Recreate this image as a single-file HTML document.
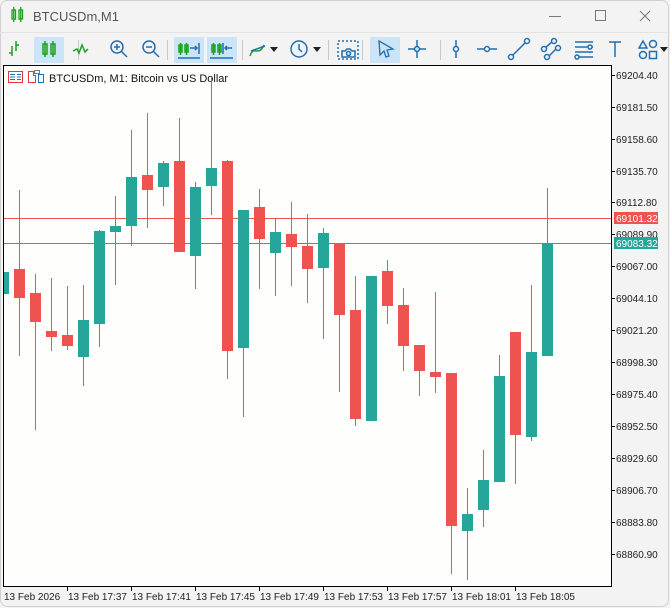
<!DOCTYPE html>
<html><head><meta charset="utf-8"><style>
html,body{margin:0;padding:0;background:#f3f3f3;width:670px;height:608px;overflow:hidden}
svg{display:block}
text{font-family:"Liberation Sans",sans-serif}
</style></head><body>
<svg width="670" height="608" viewBox="0 0 670 608" xmlns="http://www.w3.org/2000/svg">
<rect x="0" y="0" width="670" height="608" fill="#f3f3f3"/>
<rect x="0.5" y="0.5" width="668" height="606" rx="7" fill="none" stroke="#d0d0d0"/>
<!-- title -->
<g stroke="#1aa31a" stroke-width="1.3" fill="none">
<rect x="12" y="10" width="3.5" height="9"/><line x1="13.75" y1="7" x2="13.75" y2="22"/>
<rect x="19" y="10" width="3.5" height="9"/><line x1="20.75" y1="7" x2="20.75" y2="22"/>
</g>
<text x="33" y="21" font-size="13" fill="#555">BTCUSDm,M1</text>
<line x1="549" y1="16.5" x2="561" y2="16.5" stroke="#777"/>
<rect x="595.5" y="10.5" width="10" height="10" fill="none" stroke="#777"/>
<path d="M640 11L650 21M650 11L640 21" stroke="#777"/>
<line x1="0" y1="32.5" x2="670" y2="32.5" stroke="#e2e2e2"/>
<!-- toolbar -->
<g>
<rect x="34" y="37" width="30" height="26" fill="#cce4f7"/>
<rect x="174" y="37" width="30" height="26" fill="#cce4f7"/>
<rect x="207" y="37" width="30" height="26" fill="#cce4f7"/>
<rect x="370" y="37" width="30" height="26" fill="#cce4f7"/>
<g stroke="#c8c8c8"><line x1="78.5" y1="40" x2="78.5" y2="60"/><line x1="167.5" y1="40" x2="167.5" y2="60"/><line x1="242.5" y1="40" x2="242.5" y2="60"/><line x1="328.5" y1="40" x2="328.5" y2="60"/><line x1="362.5" y1="40" x2="362.5" y2="60"/><line x1="440.5" y1="40" x2="440.5" y2="60"/></g>
<g stroke="#1aa31a" stroke-width="1.5" fill="none">
<path d="M12 56V46M9 53H12M16 51V41M16 45H19"/>
<rect x="43" y="44" width="4" height="10"/><line x1="45" y1="41" x2="45" y2="57"/>
<rect x="51" y="44" width="4" height="10"/><line x1="53" y1="41" x2="53" y2="57"/>
<path d="M73 51L77 49L79 53L82 45L85 52L88 49"/>
<rect x="179" y="45" width="3" height="7"/><line x1="180.5" y1="43" x2="180.5" y2="55"/>
<rect x="185" y="45" width="3" height="7"/><line x1="186.5" y1="43" x2="186.5" y2="55"/>
<rect x="212" y="45" width="3" height="7"/><line x1="213.5" y1="43" x2="213.5" y2="55"/>
<rect x="218" y="45" width="3" height="7"/><line x1="219.5" y1="43" x2="219.5" y2="55"/>
<path d="M250 56C254 44 258 58 264 45" />
</g>
<g stroke="#1f6fb2" stroke-width="1.5" fill="none">
<circle cx="117" cy="47" r="6"/><path d="M121 51L127 57M114 47H120M117 44V50"/>
<circle cx="149" cy="47" r="6"/><path d="M153 51L159 57M146 47H152"/>
<path d="M190 48H197M195 46L197 48L195 50M199 43V54M178 58H200"/>
<path d="M225 48H232M227 46L225 48L227 50M223 43V54M210 58H233"/>
<path d="M251 51L265 46"/>
<circle cx="299" cy="49" r="8"/><path d="M299 44V49L302 52"/>
<rect x="338" y="41" width="20" height="18" stroke-dasharray="2 2"/>
<path d="M342 57V51H345L347 49H350L352 51H355V57Z"/><circle cx="348.5" cy="53.5" r="2"/>
<path d="M379 41L393 49L387 50L389 56L386 57L384 51L380 55Z" stroke-width="1.3"/>
<path d="M408 49H426M417 40V58"/><circle cx="417" cy="49" r="2.5" fill="#cce4f7"/>
<path d="M456 40V58"/><circle cx="456" cy="49" r="2.5" fill="#f3f3f3"/>
<path d="M477 49H497"/><circle cx="487" cy="49" r="2.5" fill="#f3f3f3"/>
<path d="M512 56L526 42"/><circle cx="511" cy="57" r="2.5" fill="#f3f3f3"/><circle cx="527" cy="41" r="2.5" fill="#f3f3f3"/>
<path d="M545 48L553 41M548 57L557 48"/><circle cx="544" cy="49" r="2.5" fill="#f3f3f3"/><circle cx="554" cy="41" r="2.5" fill="#f3f3f3"/><circle cx="547" cy="57" r="2.5" fill="#f3f3f3"/><circle cx="558" cy="48" r="2.5" fill="#f3f3f3"/>
<path d="M575 42H593M575 47H593M575 52H593M577 57H593"/><circle cx="590" cy="47" r="2" fill="#f3f3f3"/><circle cx="577" cy="57" r="2" fill="#f3f3f3"/>
<path d="M609 42H621M615 42V57"/>
<path d="M639 48L643 41L647 48Z"/><circle cx="653" cy="44" r="3.5"/><circle cx="643" cy="55" r="3.5"/><rect x="649.5" y="51.5" width="7" height="7"/>
</g>
<g fill="#222"><path d="M270 47H278L274 52Z"/><path d="M313 47H321L317 52Z"/><path d="M660 47H668L664 52Z"/></g>
</g>
<!-- chart area -->
<rect x="3" y="65" width="608" height="521" fill="#fefefd"/>
<path d="M3.5 65V586.5H611.5V65" fill="none" stroke="#000"/>
<line x1="3" y1="65.5" x2="611" y2="65.5" stroke="#000"/>
<!-- legend -->
<g stroke-width="1" fill="none">
<rect x="8.5" y="71.5" width="14" height="11" stroke="#e53935"/>
<path d="M10 74.5H15M10 77H15M10 79.5H15M17 74.5H21M17 77H21M17 79.5H21" stroke="#1f6fb2"/>
<path d="M28.5 82.5V71.5H33.5V75.5H35.5V82.5Z" stroke="#e53935"/>
<path d="M38.5 82.5V74.5H43.5V82.5Z" stroke="#1f6fb2"/><rect x="34.5" y="70.5" width="5" height="3" stroke="#777"/>
</g>
<text x="49" y="82" font-size="11" fill="#111">BTCUSDm, M1:  Bitcoin vs US Dollar</text>
<!-- level lines -->
<line x1="4" y1="218.5" x2="611" y2="218.5" stroke="#ef5350"/>
<line x1="4" y1="243.5" x2="611" y2="243.5" stroke="#26a69a"/>
<!-- candles -->
<g id="c" stroke-width="1">
<g fill="#26a69a" stroke="#26a69a"><rect x="4" y="272" width="5" height="22" stroke="none"/></g>
</g>
<g>
<!-- helper: each candle wick line + body rect -->
<g stroke="#ef5350" fill="none">
<line x1="19.5" y1="190" x2="19.5" y2="356"/><line x1="35.5" y1="274" x2="35.5" y2="430"/>
<line x1="51.5" y1="278" x2="51.5" y2="351"/><line x1="67.5" y1="286" x2="67.5" y2="350"/>
<line x1="147.5" y1="113" x2="147.5" y2="228"/><line x1="179.5" y1="118" x2="179.5" y2="252"/>
<line x1="227.5" y1="160" x2="227.5" y2="379"/><line x1="259.5" y1="189" x2="259.5" y2="289"/>
<line x1="291.5" y1="202" x2="291.5" y2="286"/><line x1="307.5" y1="214" x2="307.5" y2="303"/>
<line x1="339.5" y1="243" x2="339.5" y2="392"/><line x1="355.5" y1="276" x2="355.5" y2="426"/>
<line x1="387.5" y1="260" x2="387.5" y2="324"/><line x1="403.5" y1="288" x2="403.5" y2="371"/>
<line x1="419.5" y1="345" x2="419.5" y2="396"/><line x1="435.5" y1="292" x2="435.5" y2="393"/>
<line x1="451.5" y1="373" x2="451.5" y2="574"/><line x1="515.5" y1="332" x2="515.5" y2="484"/>
</g>
<g fill="#ef5350">
<rect x="14" y="269" width="11" height="29"/><rect x="30" y="293" width="11" height="29"/>
<rect x="46" y="331" width="11" height="6"/><rect x="62" y="335" width="11" height="11"/>
<rect x="142" y="175" width="11" height="15"/><rect x="174" y="161" width="11" height="91"/>
<rect x="222" y="161" width="11" height="190"/><rect x="254" y="207" width="11" height="32"/>
<rect x="286" y="234" width="11" height="13"/><rect x="302" y="246" width="11" height="23"/>
<rect x="334" y="243" width="11" height="72"/><rect x="350" y="310" width="11" height="109"/>
<rect x="382" y="271" width="11" height="35"/><rect x="398" y="305" width="11" height="41"/>
<rect x="414" y="345" width="11" height="26"/><rect x="430" y="372" width="11" height="5"/>
<rect x="446" y="373" width="11" height="153"/><rect x="510" y="332" width="11" height="103"/>
</g>
<g stroke="#26a69a" fill="none">
<line x1="83.5" y1="285" x2="83.5" y2="386"/><line x1="99.5" y1="230" x2="99.5" y2="347"/>
<line x1="115.5" y1="196" x2="115.5" y2="285"/><line x1="131.5" y1="130" x2="131.5" y2="246"/>
<line x1="163.5" y1="161" x2="163.5" y2="206"/><line x1="195.5" y1="182" x2="195.5" y2="289"/>
<line x1="211.5" y1="78" x2="211.5" y2="215"/><line x1="243.5" y1="210" x2="243.5" y2="417"/>
<line x1="275.5" y1="218" x2="275.5" y2="296"/><line x1="323.5" y1="228" x2="323.5" y2="339"/>
<line x1="371.5" y1="276" x2="371.5" y2="421"/><line x1="467.5" y1="488" x2="467.5" y2="580"/>
<line x1="483.5" y1="450" x2="483.5" y2="527"/><line x1="499.5" y1="355" x2="499.5" y2="482"/>
<line x1="531.5" y1="285" x2="531.5" y2="441"/><line x1="547.5" y1="188" x2="547.5" y2="356"/>
</g>
<g fill="#26a69a">
<rect x="78" y="320" width="11" height="37"/><rect x="94" y="231" width="11" height="93"/>
<rect x="110" y="226" width="11" height="6"/><rect x="126" y="177" width="11" height="49"/>
<rect x="158" y="163" width="11" height="24"/><rect x="190" y="187" width="11" height="69"/>
<rect x="206" y="168" width="11" height="18"/><rect x="238" y="210" width="11" height="138"/>
<rect x="270" y="232" width="11" height="21"/><rect x="318" y="233" width="11" height="35"/>
<rect x="366" y="276" width="11" height="145"/><rect x="462" y="514" width="11" height="17"/>
<rect x="478" y="480" width="11" height="30"/><rect x="494" y="376" width="11" height="106"/>
<rect x="526" y="352" width="11" height="85"/><rect x="542" y="243" width="11" height="113"/>
</g>
</g>
<!-- price axis -->
<g font-size="10" fill="#222">
<g stroke="#000">
<line x1="611" y1="75.5" x2="615" y2="75.5"/><line x1="611" y1="107.5" x2="615" y2="107.5"/><line x1="611" y1="139.5" x2="615" y2="139.5"/><line x1="611" y1="171.5" x2="615" y2="171.5"/><line x1="611" y1="202.5" x2="615" y2="202.5"/><line x1="611" y1="234.5" x2="615" y2="234.5"/><line x1="611" y1="266.5" x2="615" y2="266.5"/><line x1="611" y1="298.5" x2="615" y2="298.5"/><line x1="611" y1="330.5" x2="615" y2="330.5"/><line x1="611" y1="362.5" x2="615" y2="362.5"/><line x1="611" y1="394.5" x2="615" y2="394.5"/><line x1="611" y1="426.5" x2="615" y2="426.5"/><line x1="611" y1="458.5" x2="615" y2="458.5"/><line x1="611" y1="490.5" x2="615" y2="490.5"/><line x1="611" y1="522.5" x2="615" y2="522.5"/><line x1="611" y1="554.5" x2="615" y2="554.5"/>
</g>
<text x="616" y="79">69204.40</text><text x="616" y="111">69181.50</text><text x="616" y="143">69158.60</text><text x="616" y="175">69135.70</text><text x="616" y="206">69112.80</text><text x="616" y="238">69089.90</text><text x="616" y="270">69067.00</text><text x="616" y="302">69044.10</text><text x="616" y="334">69021.20</text><text x="616" y="366">68998.30</text><text x="616" y="398">68975.40</text><text x="616" y="430">68952.50</text><text x="616" y="462">68929.60</text><text x="616" y="494">68906.70</text><text x="616" y="526">68883.80</text><text x="616" y="558">68860.90</text>
<rect x="614" y="212" width="44" height="12" fill="#ef5350"/><text x="616" y="222" fill="#fff">69101.32</text>
<rect x="614" y="237" width="44" height="12" fill="#26a69a"/><text x="616" y="247" fill="#fff">69083.32</text>
</g>
<!-- time axis -->
<g stroke="#000"><line x1="67.5" y1="586" x2="67.5" y2="591"/><line x1="131.5" y1="586" x2="131.5" y2="591"/><line x1="195.5" y1="586" x2="195.5" y2="591"/><line x1="259.5" y1="586" x2="259.5" y2="591"/><line x1="323.5" y1="586" x2="323.5" y2="591"/><line x1="387.5" y1="586" x2="387.5" y2="591"/><line x1="451.5" y1="586" x2="451.5" y2="591"/><line x1="515.5" y1="586" x2="515.5" y2="591"/></g>
<g font-size="10" fill="#222">
<text x="4" y="600">13 Feb 2026</text><text x="68" y="600">13 Feb 17:37</text><text x="132" y="600">13 Feb 17:41</text><text x="196" y="600">13 Feb 17:45</text><text x="260" y="600">13 Feb 17:49</text><text x="324" y="600">13 Feb 17:53</text><text x="388" y="600">13 Feb 17:57</text><text x="452" y="600">13 Feb 18:01</text><text x="516" y="600">13 Feb 18:05</text>
</g>
</svg>
</body></html>
